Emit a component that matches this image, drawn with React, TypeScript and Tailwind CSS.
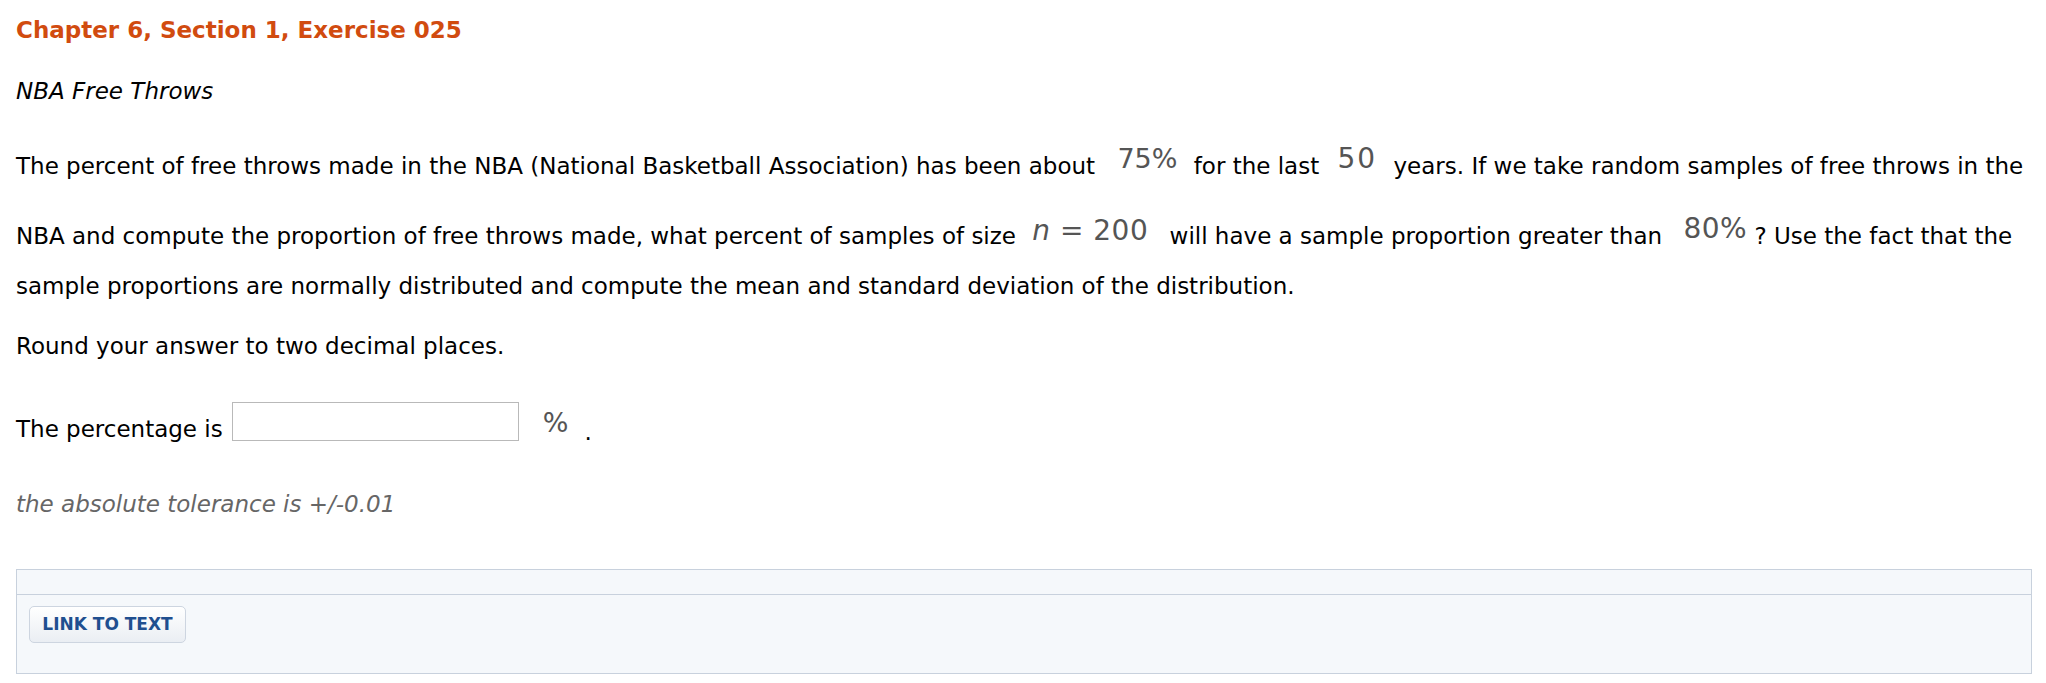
import React from "react";

const Math = ({ children, className = "" }: { children: React.ReactNode; className?: string }) => (
  <span
    className={`inline-block leading-none text-[#555555] ${className}`}
    style={{ fontFamily: '"DejaVu Sans", sans-serif' }}
  >
    {children}
  </span>
);

export default function App() {
  return (
    <div
      className="w-full min-h-[683px] bg-white pl-[16px] pr-[14px] text-black"
      style={{ fontFamily: '"DejaVu Sans", Verdana, sans-serif' }}
    >
      <div className="pt-[15px] h-[45px] text-[23px] leading-[30px] font-bold text-[#d14b0f]">
        Chapter 6, Section 1, Exercise 025
      </div>
      <div className="mt-[31px] h-[30px] text-[23px] leading-[30px] italic">NBA Free Throws</div>

      <div className="mt-[35px] text-[23px]">
        <div className="h-[50px] leading-[50px] whitespace-nowrap">
          The percent of free throws made in the NBA (National Basketball Association) has been about{" "}
          <Math className="text-[27px] align-[6px] ml-[15px] mr-[9px]">75%</Math> for the last{" "}
          <Math className="text-[28px] tracking-[2px] align-[6px] ml-[11px] mr-[9px]">50</Math> years. If we
          take random samples of free throws in the
        </div>
        <div className="mt-[20px] h-[50px] leading-[50px] whitespace-nowrap">
          NBA and compute the proportion of free throws made, what percent of samples of size{" "}
          <Math className="text-[28px] tracking-[0.5px] align-[4px] ml-[9px] mr-[14px]">
            <span className="italic">n</span> = 200
          </Math>{" "}
          will have a sample proportion greater than{" "}
          <Math className="text-[28px] tracking-[0.5px] align-[6px] ml-[14px] mr-[0px]">80%</Math> ? Use the
          fact that the
        </div>
        <div className="h-[50px] leading-[50px] whitespace-nowrap">
          sample proportions are normally distributed and compute the mean and standard deviation of the
          distribution.
        </div>
        <div className="mt-[10px] h-[50px] leading-[50px]">Round your answer to two decimal places.</div>

        <div className="mt-[31px] flex items-start h-[50px]">
          <span className="mt-[12px] leading-[30px]">The percentage is</span>
          <input
            type="text"
            aria-label="The percentage"
            className="ml-[9px] w-[287px] h-[39px] border border-[#b9b9b9] bg-white outline-none"
          />
          <span
            className="ml-[24px] mt-[6px] leading-[30px] text-[27px] text-[#555555]"
            style={{ fontFamily: '"DejaVu Sans", sans-serif' }}
          >
            %
          </span>
          <span className="ml-[16px] mt-[15px] leading-[30px]">.</span>
        </div>

        <div className="mt-[37px] h-[30px] leading-[30px] italic text-[#666666]">
          the absolute tolerance is +/-0.01
        </div>
      </div>

      <div className="mt-[50px] border border-[#c8d1dd] bg-[#f5f8fb]">
        <div className="h-[25px] border-b border-[#c8d1dd]"></div>
        <div className="h-[78px] px-[12px] pt-[11px]">
          <button
            type="button"
            className="h-[37px] w-[157px] rounded-[5px] border border-[#cdd5e0] bg-gradient-to-b from-white to-[#eaeef3] text-[17px] font-bold text-[#1f4f8f]"
            style={{ fontFamily: '"DejaVu Sans", sans-serif' }}
          >
            LINK TO TEXT
          </button>
        </div>
      </div>
    </div>
  );
}
